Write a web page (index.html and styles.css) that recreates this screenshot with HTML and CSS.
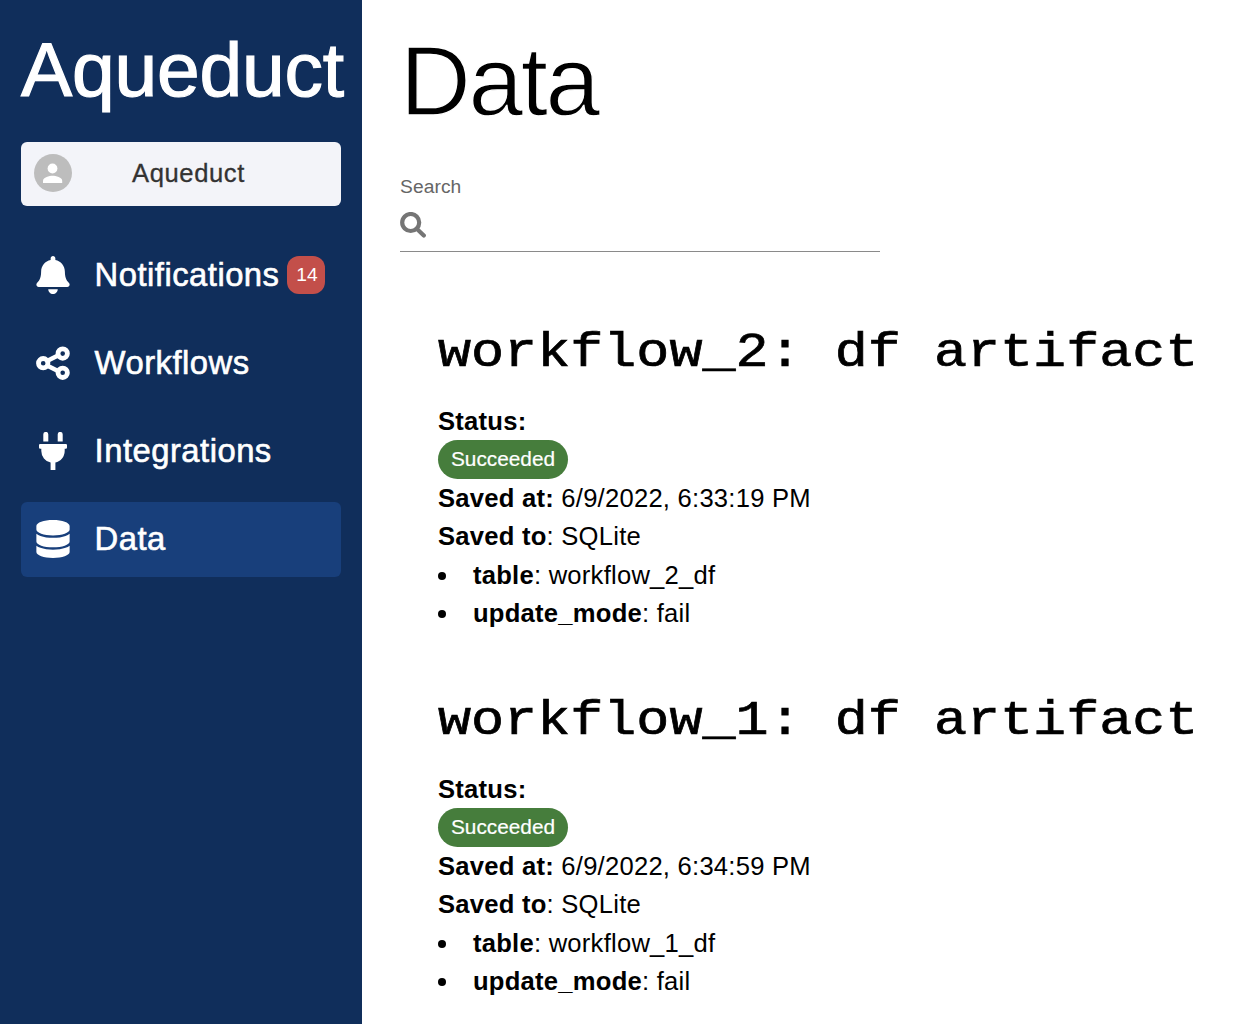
FILE: index.html
```html
<!DOCTYPE html>
<html lang="en">
<head>
<meta charset="utf-8">
<title>Aqueduct</title>
<link rel="stylesheet" href="styles.css">
</head>
<body>
<aside class="sidebar">
  <div class="brand">Aqueduct</div>
  <div class="account">
    <svg class="avatar" viewBox="0 0 38 38"><circle cx="19" cy="19" r="19" fill="#bdbdbd"/><circle cx="18.5" cy="14.5" r="4.9" fill="#fff"/><path d="M9 29v-2.3c0-3.2 6.4-4.9 9.6-4.9s9.6 1.7 9.6 4.9V29z" fill="#fff"/></svg>
    <span class="account-name">Aqueduct</span>
  </div>
  <nav class="nav">
    <a class="nav-item">
      <svg class="nav-icon" viewBox="0 0 448 512"><path fill="currentColor" d="M224 512c35.320 0 63.970-28.650 63.970-64H160.030c0 35.350 28.650 64 63.970 64zm215.390-149.710c-19.320-20.760-55.470-51.990-55.470-154.290 0-77.700-54.480-139.900-127.940-155.160V32c0-17.670-14.320-32-31.980-32s-31.980 14.330-31.980 32v20.840C118.560 68.100 64.080 130.300 64.080 208c0 102.300-36.150 133.530-55.470 154.290-6 6.450-8.660 14.160-8.610 21.710.11 16.400 12.980 32 32.100 32h383.800c19.120 0 32-15.600 32.100-32 .05-7.550-2.610-15.270-8.610-21.710z"/></svg>
      <span>Notifications</span><span class="count">14</span>
    </a>
    <a class="nav-item">
      <svg class="nav-icon" viewBox="0 0 34 38"><g fill="none" stroke="currentColor"><path stroke-width="4.4" d="M11 17 22 11.500M11 21.500l11 5.500"/><g stroke-width="4.800"><circle cx="7.200" cy="19.200" r="4.700"/><circle cx="26.700" cy="9.600" r="4.700"/><circle cx="26.700" cy="28.800" r="4.700"/></g></g></svg>
      <span>Workflows</span>
    </a>
    <a class="nav-item">
      <svg class="nav-icon" viewBox="0 0 34 38"><path fill="currentColor" d="M7.300 9.500V2.400a2.500 2.500 0 0 1 5 0v7.100zM21.700 9.500V2.400a2.500 2.500 0 0 1 5 0v7.100zM4.200 11.900h25.600a1.200 1.200 0 0 1 1.200 1.200v2.400a1.200 1.200 0 0 1-1.200 1.200h-1.100V19c0 5.700-4 10.500-9.300 11.600V38h-4.800v-7.400A11.900 11.900 0 0 1 5.300 19v-2.300H4.200A1.200 1.200 0 0 1 3 15.500v-2.400a1.200 1.200 0 0 1 1.200-1.200z"/></svg>
      <span>Integrations</span>
    </a>
    <a class="nav-item active">
      <svg class="nav-icon" viewBox="0 0 448 512"><path fill="currentColor" d="M448 80v48c0 44.200-100.300 80-224 80S0 172.200 0 128V80C0 35.800 100.300 0 224 0s224 35.800 224 80zM393.200 214.700c20.800-7.400 39.900-16.900 54.800-28.600V288c0 44.200-100.300 80-224 80S0 332.200 0 288V186.100c14.900 11.800 34 21.200 54.800 28.600C99.700 230.700 159.500 240 224 240s124.300-9.300 169.200-25.300zM0 346.100c14.900 11.800 34 21.200 54.800 28.600C99.700 390.700 159.500 400 224 400s124.300-9.300 169.200-25.300c20.800-7.400 39.900-16.900 54.800-28.600V432c0 44.200-100.300 80-224 80S0 476.200 0 432z"/></svg>
      <span>Data</span>
    </a>
  </nav>
</aside>
<main class="content">
  <h1 class="page-title">Data</h1>
  <div class="search">
    <div class="search-label">Search</div>
    <div class="search-field"><svg class="search-icon" viewBox="0 0 26 26"><circle cx="10.700" cy="10.500" r="8.500" fill="none" stroke="currentColor" stroke-width="4.2"/><path d="M17 17l6.800 6.500" stroke="currentColor" stroke-width="4.200" stroke-linecap="round"/></svg></div>
  </div>
  <section class="artifact">
    <h2 class="artifact-title">workflow_2: df artifact</h2>
    <div class="line"><b>Status:</b></div>
    <div class="line"><span class="chip">Succeeded</span></div>
    <div class="line"><b>Saved at:</b> 6/9/2022, 6:33:19 PM</div>
    <div class="line"><b>Saved to</b>: SQLite</div>
    <ul class="params">
      <li><b>table</b>: workflow_2_df</li>
      <li><b>update_mode</b>: fail</li>
    </ul>
  </section>
  <section class="artifact">
    <h2 class="artifact-title">workflow_1: df artifact</h2>
    <div class="line"><b>Status:</b></div>
    <div class="line"><span class="chip">Succeeded</span></div>
    <div class="line"><b>Saved at:</b> 6/9/2022, 6:34:59 PM</div>
    <div class="line"><b>Saved to</b>: SQLite</div>
    <ul class="params">
      <li><b>table</b>: workflow_1_df</li>
      <li><b>update_mode</b>: fail</li>
    </ul>
  </section>
</main>
</body>
</html>
```
FILE: styles.css
```css
* { box-sizing: border-box; }
body {
  margin: 0;
  display: flex;
  height: 1024px;
  overflow: hidden;
  background: #fff;
  color: #000;
  font: 25.6px/38.4px "Liberation Sans", Arial, sans-serif;
}
.sidebar {
  flex: none;
  width: 362px;
  padding: 24px 21px 0;
  background: #102e5b;
  color: #fff;
}
.brand {
  height: 90px;
  font-size: 76.8px;
  line-height: 90px;
  letter-spacing: -0.2px;
  white-space: nowrap;
  -webkit-text-stroke: 1.2px #fff;
}
.account {
  display: flex;
  align-items: center;
  height: 64px;
  margin-top: 28px;
  padding: 0 13px 2px;
  border-radius: 6px;
  background: #f3f4f9;
  color: #333;
}
.avatar { width: 38px; height: 38px; flex: none; }
.account-name { margin-left: 60px; letter-spacing: 0.6px; -webkit-text-stroke: 0.3px #333; }
.nav { display: flex; flex-direction: column; gap: 13px; margin-top: 32px; }
.nav-item {
  display: flex;
  align-items: center;
  height: 75px;
  padding-left: 15px;
  border-radius: 6px;
  font-size: 32.8px;
  letter-spacing: 0.48px;
  white-space: nowrap;
  -webkit-text-stroke: 0.6px #fff;
}
.nav-item.active { background: #183f7b; }
.nav-icon { width: 34px; height: 38px; flex: none; margin: 0 24.6px 2px 0; }
.count {
  width: 38px;
  height: 38px;
  margin: 0 0 2px 8px;
  border-radius: 12px;
  background: #c34f4a;
  font-size: 19.2px;
  letter-spacing: 0;
  text-align: center;
  text-indent: 1px;
  -webkit-text-stroke: 0;
}
.content { flex: 1; min-width: 0; padding: 24px 0 0 38px; }
.page-title {
  margin: 0;
  height: 115px;
  font-size: 98px;
  font-weight: 400;
  line-height: 115px;
  letter-spacing: -2.3px;
  -webkit-text-stroke: 1.3px #fff;
}
.search { width: 480px; margin-top: 36px; color: #666; }
.search-label { height: 24px; font-size: 19.2px; line-height: 24px; letter-spacing: 0.1px; }
.search-field {
  display: flex;
  align-items: center;
  height: 53px;
  border-bottom: 1px solid #8a8a8a;
}
.search-icon { width: 26px; height: 26px; color: #757575; }
.artifact { height: 368px; padding-left: 38px; letter-spacing: 0.24px; }
.search + .artifact { margin-top: 60px; }
.artifact-title {
  margin: 0;
  height: 90px;
  font: 400 55.1px/76px "Liberation Mono", "Courier New", monospace;
  letter-spacing: 0;
  white-space: nowrap;
  font-variant-ligatures: none;
  transform: scaleY(0.86);
  transform-origin: 0 64px;
  -webkit-text-stroke: 0.8px #000;
}
.line { height: 38.4px; }
.chip {
  display: block;
  width: 130px;
  height: 38.4px;
  border-radius: 20px;
  background: #467d3c;
  color: #fff;
  font-size: 20.8px;
  letter-spacing: 0;
  text-align: center;
  -webkit-text-stroke: 0.2px #fff;
}
.params { margin: 0; padding: 0; list-style: none; }
.params li { display: flow-root; height: 38.4px; }
.params li::before {
  content: "";
  float: left;
  width: 8px;
  height: 8px;
  margin: 16px 27px 0 0;
  border-radius: 50%;
  background: #000;
}
```
